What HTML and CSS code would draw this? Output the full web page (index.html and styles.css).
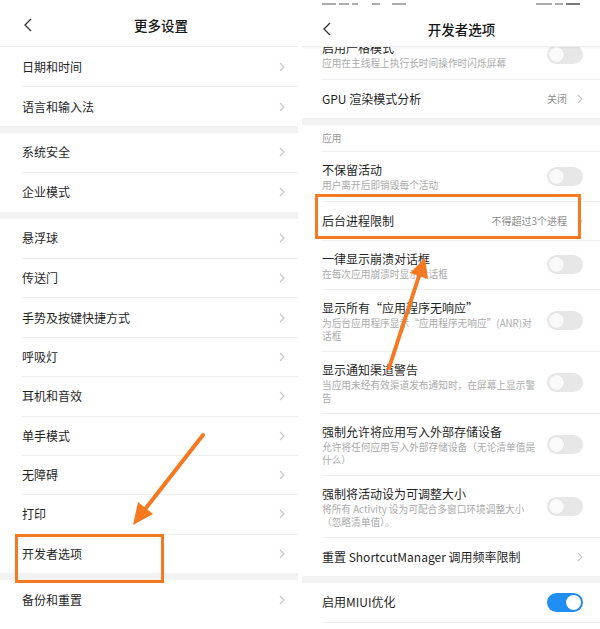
FILE: index.html
```html
<!DOCTYPE html>
<html lang="zh-CN">
<head>
<meta charset="utf-8">
<title>设置</title>
<link rel="stylesheet" href="styles.css">
</head>
<body>
<div class="screen">
  <section class="panel panel-left">
    <header class="nav nav-left">
      <span class="back"><svg width="8" height="14" viewBox="0 0 8 14"><polyline points="7,1 1,7 7,13" fill="none" stroke="#333" stroke-width="1.3"/></svg></span>
      <h1 class="nav-title">更多设置</h1>
      <span></span>
    </header>
    <ul class="group">
      <li class="row"><span class="label">日期和时间</span><svg class="chev" width="6" height="10" viewBox="0 0 6 10"><polyline points="1,1 5,5 1,9" fill="none" stroke="#c6c6c6" stroke-width="1.1"/></svg></li>
      <li class="row"><span class="label">语言和输入法</span><svg class="chev" width="6" height="10" viewBox="0 0 6 10"><polyline points="1,1 5,5 1,9" fill="none" stroke="#c6c6c6" stroke-width="1.1"/></svg></li>
    </ul>
    <div class="band"></div>
    <ul class="group">
      <li class="row"><span class="label">系统安全</span><svg class="chev" width="6" height="10" viewBox="0 0 6 10"><polyline points="1,1 5,5 1,9" fill="none" stroke="#c6c6c6" stroke-width="1.1"/></svg></li>
      <li class="row"><span class="label">企业模式</span><svg class="chev" width="6" height="10" viewBox="0 0 6 10"><polyline points="1,1 5,5 1,9" fill="none" stroke="#c6c6c6" stroke-width="1.1"/></svg></li>
    </ul>
    <div class="band"></div>
    <ul class="group">
      <li class="row"><span class="label">悬浮球</span><svg class="chev" width="6" height="10" viewBox="0 0 6 10"><polyline points="1,1 5,5 1,9" fill="none" stroke="#c6c6c6" stroke-width="1.1"/></svg></li>
      <li class="row"><span class="label">传送门</span><svg class="chev" width="6" height="10" viewBox="0 0 6 10"><polyline points="1,1 5,5 1,9" fill="none" stroke="#c6c6c6" stroke-width="1.1"/></svg></li>
      <li class="row"><span class="label">手势及按键快捷方式</span><svg class="chev" width="6" height="10" viewBox="0 0 6 10"><polyline points="1,1 5,5 1,9" fill="none" stroke="#c6c6c6" stroke-width="1.1"/></svg></li>
      <li class="row"><span class="label">呼吸灯</span><svg class="chev" width="6" height="10" viewBox="0 0 6 10"><polyline points="1,1 5,5 1,9" fill="none" stroke="#c6c6c6" stroke-width="1.1"/></svg></li>
      <li class="row"><span class="label">耳机和音效</span><svg class="chev" width="6" height="10" viewBox="0 0 6 10"><polyline points="1,1 5,5 1,9" fill="none" stroke="#c6c6c6" stroke-width="1.1"/></svg></li>
      <li class="row"><span class="label">单手模式</span><svg class="chev" width="6" height="10" viewBox="0 0 6 10"><polyline points="1,1 5,5 1,9" fill="none" stroke="#c6c6c6" stroke-width="1.1"/></svg></li>
      <li class="row"><span class="label">无障碍</span><svg class="chev" width="6" height="10" viewBox="0 0 6 10"><polyline points="1,1 5,5 1,9" fill="none" stroke="#c6c6c6" stroke-width="1.1"/></svg></li>
      <li class="row"><span class="label">打印</span><svg class="chev" width="6" height="10" viewBox="0 0 6 10"><polyline points="1,1 5,5 1,9" fill="none" stroke="#c6c6c6" stroke-width="1.1"/></svg></li>
      <li class="row marked marked-left"><span class="label">开发者选项</span><svg class="chev" width="6" height="10" viewBox="0 0 6 10"><polyline points="1,1 5,5 1,9" fill="none" stroke="#c6c6c6" stroke-width="1.1"/></svg></li>
    </ul>
    <div class="band"></div>
    <ul class="group">
      <li class="row row-last"><span class="label">备份和重置</span><svg class="chev" width="6" height="10" viewBox="0 0 6 10"><polyline points="1,1 5,5 1,9" fill="none" stroke="#c6c6c6" stroke-width="1.1"/></svg></li>
    </ul>
  </section>

  <section class="panel panel-right">
    <header class="nav-wrap">
      <div class="status">
        <span class="sb w14"></span><span class="sb w10"></span><span class="sb w6"></span><span class="gap8"></span><span class="sb w8"></span><span class="gap6"></span><span class="sb w14"></span>
        <span class="spacer"></span>
        <span class="sb w16"></span><span class="sb w8"></span><span class="sb w14 dark"></span>
      </div>
      <div class="nav nav-right">
        <span class="back"><svg width="8" height="14" viewBox="0 0 8 14"><polyline points="7,1 1,7 7,13" fill="none" stroke="#333" stroke-width="1.3"/></svg></span>
        <h1 class="nav-title">开发者选项</h1>
        <span></span>
      </div>
    </header>
    <div class="list">
      <ul class="group">
        <li class="row r2 cut">
          <div class="texts"><div class="title">启用严格模式</div><div class="sub">应用在主线程上执行长时间操作时闪烁屏幕</div></div>
          <span class="toggle"></span>
        </li>
        <li class="row r1">
          <span class="label">GPU 渲染模式分析</span><span class="value">关闭</span><svg class="chev" width="6" height="10" viewBox="0 0 6 10"><polyline points="1,1 5,5 1,9" fill="none" stroke="#c6c6c6" stroke-width="1.1"/></svg>
        </li>
      </ul>
      <div class="band"></div>
      <ul class="group">
        <li class="row cat"><span class="cat-label">应用</span></li>
        <li class="row r2">
          <div class="texts"><div class="title">不保留活动</div><div class="sub">用户离开后即销毁每个活动</div></div>
          <span class="toggle"></span>
        </li>
        <li class="row r1 marked marked-right">
          <span class="label">后台进程限制</span><span class="value">不得超过3个进程</span><svg class="chev" width="6" height="10" viewBox="0 0 6 10"><polyline points="1,1 5,5 1,9" fill="none" stroke="#c6c6c6" stroke-width="1.1"/></svg>
        </li>
        <li class="row r2">
          <div class="texts"><div class="title">一律显示崩溃对话框</div><div class="sub">在每次应用崩溃时显示对话框</div></div>
          <span class="toggle"></span>
        </li>
        <li class="row r3">
          <div class="texts"><div class="title">显示所有“应用程序无响应”</div><div class="sub">为后台应用程序显示“应用程序无响应”(ANR)对<br>话框</div></div>
          <span class="toggle"></span>
        </li>
        <li class="row r3">
          <div class="texts"><div class="title">显示通知渠道警告</div><div class="sub">当应用未经有效渠道发布通知时，在屏幕上显示警<br>告</div></div>
          <span class="toggle"></span>
        </li>
        <li class="row r3">
          <div class="texts"><div class="title">强制允许将应用写入外部存储设备</div><div class="sub">允许将任何应用写入外部存储设备（无论清单值是<br>什么）</div></div>
          <span class="toggle"></span>
        </li>
        <li class="row r3">
          <div class="texts"><div class="title">强制将活动设为可调整大小</div><div class="sub">将所有 Activity 设为可配合多窗口环境调整大小<br>（忽略清单值）。</div></div>
          <span class="toggle"></span>
        </li>
        <li class="row r1">
          <span class="label">重置 ShortcutManager 调用频率限制</span><svg class="chev" width="6" height="10" viewBox="0 0 6 10"><polyline points="1,1 5,5 1,9" fill="none" stroke="#c6c6c6" stroke-width="1.1"/></svg>
        </li>
      </ul>
      <div class="band band-thin"></div>
      <ul class="group">
        <li class="row r1 row-last">
          <span class="label">启用MIUI优化</span>
          <span class="toggle on"></span>
        </li>
      </ul>
    </div>
  </section>

  <svg class="annot" width="600" height="629" viewBox="0 0 600 629">
    <line x1="203" y1="435" x2="146" y2="508" stroke="#f47920" stroke-width="4" stroke-linecap="round"/>
    <polygon points="133,525 153,514 138,502" fill="#f47920"/>
    <line x1="389" y1="368" x2="419" y2="276" stroke="#f47920" stroke-width="4" stroke-linecap="round"/>
    <polygon points="425,258 428,279 410,273" fill="#f47920"/>
  </svg>
</div>
</body>
</html>
```
FILE: styles.css
```css
* { box-sizing: border-box; margin: 0; padding: 0; }
html, body { width: 600px; height: 629px; overflow: hidden; background: #fff; }
body {
  font-family: "Noto Sans CJK SC", "Noto Sans", sans-serif;
  color: #1f1f1f;
}
ul { list-style: none; }

.screen {
  position: relative;
  display: flex;
  gap: 4px;
  width: 600px;
  height: 629px;
}

.panel {
  flex: none;
  width: 298px;
  height: 629px;
  display: flex;
  flex-direction: column;
  overflow: hidden;
  background: #fff;
}

/* navigation bars */
.nav {
  display: grid;
  grid-template-columns: 1fr auto 1fr;
  align-items: center;
}
.nav-left {
  height: 47px;
  padding: 4px 0 0 24px;
  border-bottom: 1px solid #ececec;
}
.nav-wrap {
  position: relative;
  z-index: 1;
  height: 47px;
  background: #fff;
  border-bottom: 1px solid #eeeeee;
  box-shadow: 0 1px 2px rgba(0,0,0,0.05);
  display: flex;
  flex-direction: column;
}
.nav-right {
  flex: 1;
  padding: 6px 0 0 21px;
}
.back { display: flex; align-items: center; }
.nav-title {
  font-size: 13.5px;
  font-weight: 500;
  line-height: 18px;
  color: #161616;
}

/* status-bar remnant */
.status {
  display: flex;
  align-items: flex-end;
  gap: 3px;
  height: 5px;
  padding: 0 20px 0 20px;
}
.sb { display: block; height: 2px; background: #8a8a8a; opacity: 0.7; }
.sb.dark { background: #444; }
.w6 { width: 6px; } .w8 { width: 8px; } .w10 { width: 10px; } .w14 { width: 14px; } .w16 { width: 16px; }
.gap6 { width: 6px; } .gap8 { width: 8px; }
.spacer { flex: 1; }

/* rows */
.row {
  position: relative;
  display: flex;
  align-items: center;
  margin-left: 22px;
  padding-right: 13px;
  height: 39.4px;
}
.row + .row { border-top: 1px solid #efefef; }
.label {
  flex: 1;
  font-size: 12px;
  line-height: 16px;
  color: #1f1f1f;
  white-space: nowrap;
}
.chev { flex: none; }

.band { height: 7px; background: #f3f3f3; flex: none; }
.band-thin { height: 6.5px; }

/* right panel */
.list { flex: 1; overflow: hidden; }
.panel-right .row {
  margin-left: 20px;
  padding-right: 17px;
}
.panel-right .r1 { height: 39px; }
.panel-right .r2 { height: 49.5px; }
.panel-right .r3 { height: 62px; }
.panel-right .cut { margin-top: -17.5px; }
.panel-right .row-last { height: 40px; border-bottom: 1px solid #efefef; }
.panel-right .cat { height: 26px; }

.texts { flex: 1; min-width: 0; }
.title {
  font-size: 12px;
  line-height: 18px;
  color: #1f1f1f;
  white-space: nowrap;
}
.sub {
  font-size: 9.7px;
  line-height: 12.5px;
  color: #ababab;
  white-space: nowrap;
}
.value {
  font-size: 10px;
  line-height: 14px;
  color: #8c8c8c;
  margin-right: 10px;
  white-space: nowrap;
}
.cat-label {
  font-size: 9.7px;
  line-height: 14px;
  color: #9a9a9a;
}

/* toggles */
.toggle {
  position: relative;
  flex: none;
  width: 36px;
  height: 19px;
  border-radius: 10px;
  background: #e7e7e7;
}
.toggle::after {
  content: "";
  position: absolute;
  top: 2px;
  left: 2px;
  width: 15px;
  height: 15px;
  border-radius: 50%;
  background: #fafafa;
  box-shadow: 0 0 1px rgba(0,0,0,0.12);
}
.toggle.on { background: #1f8df2; }
.toggle.on::after { left: 19px; background: #fff; }

/* annotation highlight boxes */
.marked::after {
  content: "";
  position: absolute;
  border: 3px solid #f47920;
  pointer-events: none;
}
.marked-left::after {
  left: -7px;
  top: -1px;
  width: 143px;
  height: 43px;
}
.marked-right::after {
  left: -7px;
  top: -7.5px;
  width: 260px;
  height: 39px;
}

.annot {
  position: absolute;
  left: 0;
  top: 0;
  pointer-events: none;
}
```
